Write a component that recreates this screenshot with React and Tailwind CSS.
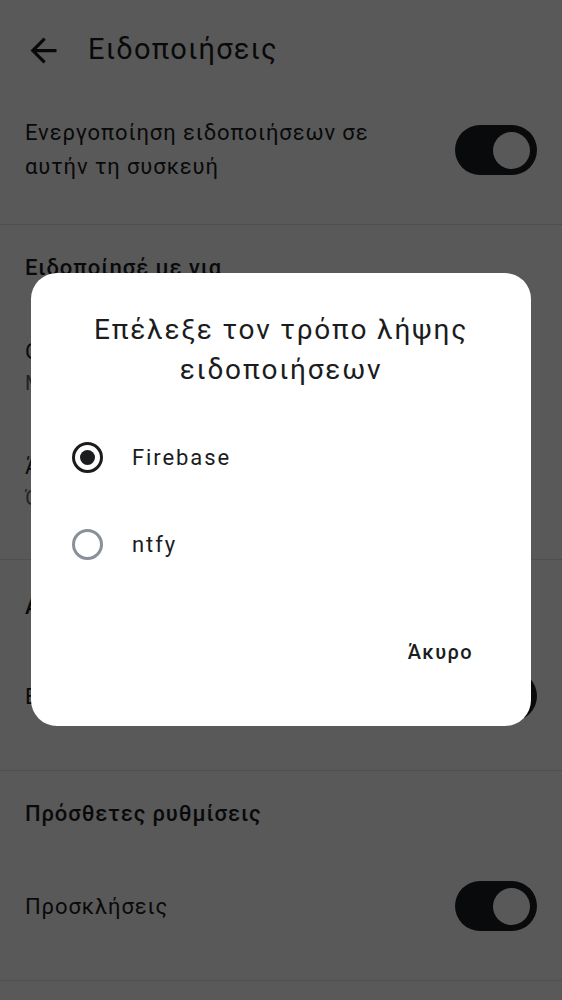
import React, { useState } from 'react';

function Toggle() {
  return (
    <div className="w-[82px] h-[50px] rounded-full bg-[#1b1d21] flex items-center justify-end px-[7px] shrink-0">
      <div className="w-[37px] h-[37px] rounded-full bg-white" />
    </div>
  );
}

function SectionHeader({ children, h }) {
  return (
    <div className={`flex items-center px-[25px] text-[22px] tracking-[0.9px] font-medium text-[#1a1c1e] ${h}`}>
      {children}
    </div>
  );
}

function Item({ title, subtitle, toggle, h }) {
  return (
    <div className={`flex items-center justify-between pl-[25px] pr-[25px] ${h}`}>
      <div className="flex flex-col">
        <span className="text-[22px] leading-[33px] tracking-[0.9px] text-[#1a1c1e]">{title}</span>
        {subtitle && <span className="text-[20px] leading-[30px] tracking-[0.8px] text-[#5e636b]">{subtitle}</span>}
      </div>
      {toggle && <Toggle />}
    </div>
  );
}

function Radio({ checked }) {
  return (
    <div
      className={`w-[31px] h-[31px] rounded-full border-[3px] flex items-center justify-center shrink-0 ${
        checked ? 'border-[#1a1c1e]' : 'border-[#8a9099]'
      }`}
    >
      {checked && <div className="w-[15px] h-[15px] rounded-full bg-[#1a1c1e]" />}
    </div>
  );
}

export default function App() {
  const [method, setMethod] = useState('firebase');

  return (
    <div className="relative w-[562px] h-[1000px] overflow-hidden bg-white font-['Roboto','Noto_Sans',sans-serif]">
      {/* page behind the dialog */}
      <div className="flex items-center h-[100px] pl-[24px]">
        <svg width="39" height="39" viewBox="0 0 24 24" fill="#1a1c1e">
          <path d="M20 11H7.83l5.59-5.59L12 4l-8 8 8 8 1.41-1.41L7.83 13H20v-2z" />
        </svg>
        <span className="ml-[25px] text-[29px] tracking-[1.2px] text-[#1a1c1e]">Ειδοποιήσεις</span>
      </div>

      <div className="flex items-center justify-between h-[125px] pb-[24px] px-[25px] border-b border-[#e2e2e6]">
        <span className="text-[22px] leading-[34px] tracking-[0.9px] text-[#1a1c1e]">
          Ενεργοποίηση ειδοποιήσεων σε
          <br />
          αυτήν τη συσκευή
        </span>
        <Toggle />
      </div>

      <div className="pb-[20px] border-b border-[#e2e2e6]">
        <SectionHeader h="h-[84px]">Ειδοποίησέ με για</SectionHeader>
        <Item h="h-[115px]" title="Οποιαδήποτε δραστηριότητα" subtitle="Μηνύματα, αντιδράσεις και αναφορές" />
        <Item h="h-[115px]" title="Άμεσα μηνύματα και αναφορές" subtitle="Όταν κάποιος σε αναφέρει" />
      </div>

      <div className="pb-[30px] border-b border-[#e2e2e6]">
        <SectionHeader h="h-[92px]">Αποσφαλμάτωση</SectionHeader>
        <Item h="h-[88px]" title="Ενεργοποίηση καταγραφής" toggle />
      </div>

      <div className="pb-[23px] border-b border-[#e2e2e6]">
        <SectionHeader h="h-[84px]">Πρόσθετες ρυθμίσεις</SectionHeader>
        <Item h="h-[102px]" title="Προσκλήσεις" toggle />
      </div>

      {/* scrim */}
      <div className="absolute inset-0 bg-black/65" />

      {/* dialog */}
      <div className="absolute left-[31px] top-[273px] w-[500px] h-[453px] rounded-[26px] bg-white flex flex-col">
        <h2 className="pt-[37px] px-[20px] text-center text-[28px] leading-[40px] tracking-[1.8px] text-[#1a1c1e]">
          Επέλεξε τον τρόπο λήψης
          <br />
          ειδοποιήσεων
        </h2>
        <div className="mt-[24px] flex flex-col">
          {[
            { id: 'firebase', label: 'Firebase' },
            { id: 'ntfy', label: 'ntfy' },
          ].map((opt) => (
            <button
              key={opt.id}
              onClick={() => setMethod(opt.id)}
              className="flex items-center h-[87px] pl-[41px] text-left"
            >
              <Radio checked={method === opt.id} />
              <span className="ml-[29px] text-[22px] tracking-[1.9px] text-[#1a1c1e]">{opt.label}</span>
            </button>
          ))}
        </div>
        <div className="flex justify-end pr-[58px] mt-[49px]">
          <button className="text-[20px] font-medium tracking-[1.4px] text-[#1a1c1e]">Άκυρο</button>
        </div>
      </div>
    </div>
  );
}
